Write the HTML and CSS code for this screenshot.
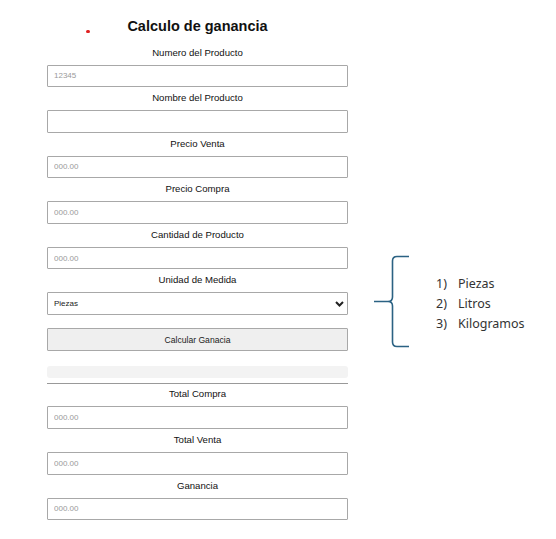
FILE: index.html
```html
<!DOCTYPE html>
<html lang="es">
<head>
    <meta charset="UTF-8">
    <meta name="viewport" content="width=device-width, initial-scale=1.0">
    <title>Calculo de ganancia</title>
    <link rel="stylesheet" href="styles.css">
</head>
<body>
    <div class="page">
        <div class="form-col">
            <div class="header">
                <span class="dot"></span>
                <h1>Calculo de ganancia</h1>
            </div>

            <div class="field">
                <label>Numero del Producto</label>
                <input type="text" placeholder="12345">
            </div>
            <div class="field">
                <label>Nombre del Producto</label>
                <input type="text">
            </div>
            <div class="field">
                <label>Precio Venta</label>
                <input type="text" placeholder="000.00">
            </div>
            <div class="field">
                <label>Precio Compra</label>
                <input type="text" placeholder="000.00">
            </div>
            <div class="field">
                <label>Cantidad de Producto</label>
                <input type="text" placeholder="000.00">
            </div>
            <div class="field">
                <label>Unidad de Medida</label>
                <div class="select-wrap">
                    <select>
                        <option>Piezas</option>
                        <option>Litros</option>
                        <option>Kilogramos</option>
                    </select>
                    <svg class="chevron" width="9" height="6" viewBox="0 0 9 6">
                        <path d="M1 1 L4.5 4.5 L8 1" fill="none" stroke="#222" stroke-width="2"/>
                    </svg>
                </div>
            </div>

            <button class="calc">Calcular Ganacia</button>
            <div class="result-bar"></div>
            <hr>

            <div class="field">
                <label>Total Compra</label>
                <input type="text" placeholder="000.00">
            </div>
            <div class="field">
                <label>Total Venta</label>
                <input type="text" placeholder="000.00">
            </div>
            <div class="field">
                <label>Ganancia</label>
                <input type="text" placeholder="000.00">
            </div>
        </div>

        <!-- nota de unidades -->
        <div class="note">
            <svg class="brace" width="38" height="94" viewBox="0 0 38 94">
                <path d="M36 1.5 H24 Q19.5 1.5 19.5 6 V42 Q19.5 46.5 15 46.5 H1 M15 46.5 Q19.5 46.5 19.5 51 V87 Q19.5 91.5 24 91.5 H36"
                      fill="none" stroke="#2b6283" stroke-width="1.6"/>
            </svg>
            <ol class="units">
                <li><span class="num">1)</span>Piezas</li>
                <li><span class="num">2)</span>Litros</li>
                <li><span class="num">3)</span>Kilogramos</li>
            </ol>
        </div>
    </div>
</body>
</html>
```

FILE: styles.css
```css
body {
    margin: 0;
    background: #fff;
    font-family: "Liberation Sans", Arial, sans-serif;
    color: #222;
}
.page {
    display: flex;
    align-items: flex-start;
}
.form-col {
    width: 301px;
    margin-left: 47px;
}
.header {
    position: relative;
    margin-top: 18px;
    margin-bottom: 11.5px;
}
.header h1 {
    margin: 0;
    font-size: 14.5px;
    line-height: 17px;
    text-align: center;
    color: #111;
}
.dot {
    position: absolute;
    left: 39px;
    top: 11.5px;
    width: 3.5px;
    height: 3.5px;
    border-radius: 50%;
    background: #e02020;
}
.field {
    display: flex;
    flex-direction: column;
    margin-bottom: 5px;
}
.field label {
    font-size: 9.6px;
    line-height: 12px;
    text-align: center;
    margin-bottom: 6px;
    color: #111;
}
input,
select {
    box-sizing: border-box;
    width: 100%;
    height: 22.6px;
    margin: 0;
    border: 1px solid #a8a8a8;
    border-radius: 1px;
    padding: 0 6px;
    font-family: "Liberation Sans", Arial, sans-serif;
    font-size: 8px;
    color: #222;
    background: #fff;
    outline: none;
}
input::placeholder {
    color: #9a9a9a;
}
.select-wrap {
    position: relative;
}
select {
    appearance: none;
    -webkit-appearance: none;
    height: 23px;
}
.chevron {
    position: absolute;
    right: 4px;
    top: 9px;
    pointer-events: none;
}
.calc {
    display: block;
    box-sizing: border-box;
    width: 100%;
    height: 23px;
    margin: 13px 0 0;
    padding: 0;
    border: 1px solid #a8a8a8;
    border-radius: 1px;
    background: #efefef;
    font-family: "Liberation Sans", Arial, sans-serif;
    font-size: 8.6px;
    color: #222;
}
.result-bar {
    height: 12px;
    margin-top: 15px;
    border-radius: 3px;
    background: #f3f3f3;
}
hr {
    margin: 5px 0 4px;
    border: none;
    border-top: 1px solid #999;
}
.note {
    display: flex;
    align-items: center;
    margin-top: 255px;
    margin-left: 25px;
}
.brace {
    display: block;
}
.units {
    list-style: none;
    margin: 0 0 0 25px;
    padding: 4px 0 0;
    font-family: "Noto Sans", "Open Sans", sans-serif;
    font-size: 12.5px;
    line-height: 20px;
    color: #333;
}
.units .num {
    display: inline-block;
    width: 22px;
}
```
